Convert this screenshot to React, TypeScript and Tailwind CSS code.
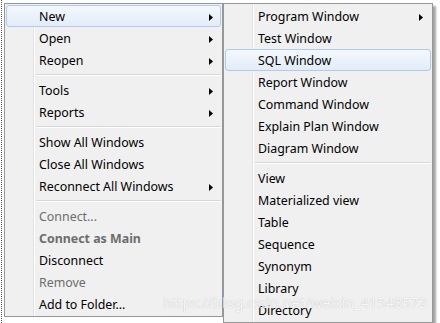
import { ReactNode } from 'react';

type Item = {
  label?: string;
  sub?: boolean;
  disabled?: boolean;
  bold?: boolean;
  active?: boolean;
  sep?: boolean;
};

const mainItems: Item[] = [
  { label: 'New', sub: true, active: true },
  { label: 'Open', sub: true },
  { label: 'Reopen', sub: true },
  { sep: true },
  { label: 'Tools', sub: true },
  { label: 'Reports', sub: true },
  { sep: true },
  { label: 'Show All Windows' },
  { label: 'Close All Windows' },
  { label: 'Reconnect All Windows', sub: true },
  { sep: true },
  { label: 'Connect...', disabled: true },
  { label: 'Connect as Main', disabled: true, bold: true },
  { label: 'Disconnect' },
  { label: 'Remove', disabled: true },
  { label: 'Add to Folder...' },
];

const newItems: Item[] = [
  { label: 'Program Window', sub: true },
  { label: 'Test Window' },
  { label: 'SQL Window', active: true },
  { label: 'Report Window' },
  { label: 'Command Window' },
  { label: 'Explain Plan Window' },
  { label: 'Diagram Window' },
  { sep: true },
  { label: 'View' },
  { label: 'Materialized view' },
  { label: 'Table' },
  { label: 'Sequence' },
  { label: 'Synonym' },
  { label: 'Library' },
  { label: 'Directory' },
];

function Arrow() {
  return (
    <svg width="4" height="7" viewBox="0 0 4 7" className="shrink-0">
      <path d="M0 0 L4 3.5 L0 7 Z" fill="#000" />
    </svg>
  );
}

function MenuRow({ item }: { item: Item }) {
  if (item.sep) {
    return (
      <div className="h-[8px] flex flex-col justify-center pl-[30px]">
        <div className="h-px bg-[#d7d7d7]" />
        <div className="h-px bg-white" />
      </div>
    );
  }
  return (
    <div
      className={
        'h-[22px] flex items-center pt-[2px] pl-[32px] pr-[7px] rounded-[3px] border ' +
        (item.active
          ? 'border-[#aeccec] bg-gradient-to-b from-[#f4f8fd] to-[#e2ecf8]'
          : 'border-transparent')
      }
    >
      <span
        className={
          'flex-1 whitespace-nowrap ' +
          (item.disabled ? 'text-[#6d6d6d] ' : 'text-black ') +
          (item.bold ? 'font-bold' : '')
        }
      >
        {item.label}
      </span>
      {item.sub && <Arrow />}
    </div>
  );
}

function Menu({ items, className, children }: { items: Item[]; className: string; children?: ReactNode }) {
  return (
    <div className={'relative bg-[#f0f0f0] border border-[#979797] p-[1px] ' + className}>
      <div className="absolute top-0 bottom-0 left-[28px] w-px bg-[#e2e3e3]" />
      <div className="absolute top-0 bottom-0 left-[29px] w-px bg-white" />
      <div className="relative flex flex-col">
        {items.map((it, i) => (
          <MenuRow key={i} item={it} />
        ))}
      </div>
      {children}
    </div>
  );
}

export default function App() {
  return (
    <div
      className="relative w-[440px] h-[323px] overflow-hidden bg-white text-[12.4px] leading-none"
      style={{ fontFamily: '"Noto Sans", "Liberation Sans", sans-serif' }}
    >
      <div className="absolute left-[1px] top-0 bottom-0 border-l border-dotted border-[#555]" />
      <div className="flex items-start pl-[4px] pt-[3px]">
        <Menu items={mainItems} className="w-[219px] shrink-0" />
        <Menu
          items={newItems}
          className="w-[210px] shrink-0 shadow-[3px_3px_2px_rgba(0,0,0,0.35)]"
        />
      </div>
      <div
        className="absolute left-[163px] top-[295px] text-[14.5px] text-white/90 whitespace-nowrap"
        style={{ textShadow: '0 0 1px rgba(0,0,0,0.3)' }}
      >
        https://blog.csdn.net/weixin_41548572
      </div>
    </div>
  );
}
